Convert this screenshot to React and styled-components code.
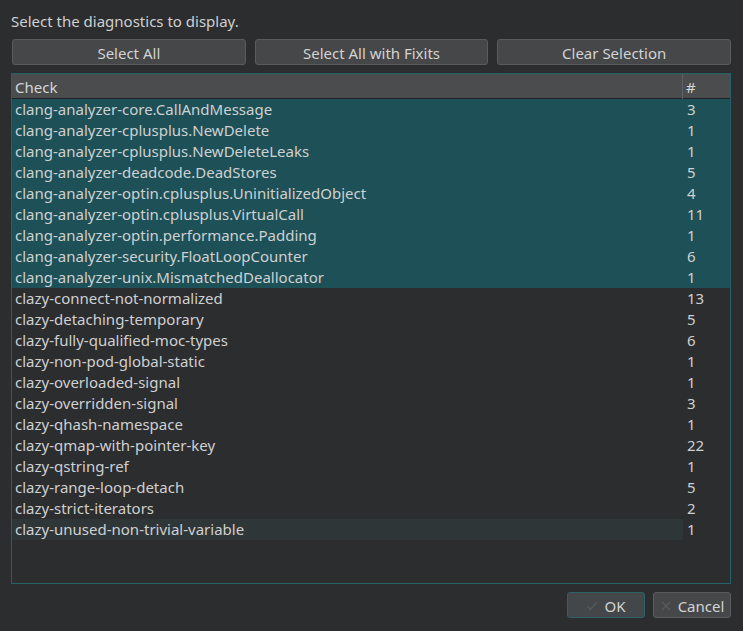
import React from "react";
import styled, { createGlobalStyle } from "styled-components";

const Global = createGlobalStyle`
  html, body { margin: 0; padding: 0; background: #2c2d2f; }
  body { font-family: "Noto Sans", "Open Sans", sans-serif; }
`;

const Dialog = styled.div`
  width: 743px;
  height: 631px;
  box-sizing: border-box;
  padding: 11px 12px 13px 11px;
  display: flex;
  flex-direction: column;
  background: #2c2d2f;
  color: #cfd0d1;
  font-size: 15px;
`;

const Label = styled.div`
  height: 20px;
  line-height: 20px;
  margin-bottom: 8px;
`;

const ButtonRow = styled.div`
  display: grid;
  grid-template-columns: 1fr 1fr 1fr;
  gap: 9px;
  padding-left: 1px;
  margin-bottom: 8px;
`;

const Button = styled.button`
  height: 26px;
  box-sizing: border-box;
  border: 1px solid ${(p) => (p.$focus ? "#2a6367" : "#5a5b5d")};
  border-radius: 3px;
  background: ${(p) => (p.$focus ? "#434749" : "#464748")};
  color: #d2d3d4;
  font-family: inherit;
  font-size: 15px;
  padding: 1px 0 0;
  display: flex;
  align-items: center;
  justify-content: center;
  gap: 6px;
`;

const Table = styled.div`
  flex: 1;
  border: 1px solid #246266;
  display: flex;
  flex-direction: column;
  overflow: hidden;
`;

const Header = styled.div`
  display: grid;
  grid-template-columns: 671px 1fr;
  height: 24px;
  background: #4b4c4d;
  border-bottom: 1px solid #1f2021;
  color: #d6d7d8;
`;

const HeadCell = styled.div`
  padding-left: ${(p) => p.$pad}px;
  line-height: 26px;
  border-right: ${(p) => (p.$divider ? "1px solid #5f6061" : "none")};
`;

const Row = styled.div`
  display: grid;
  grid-template-columns: 671px 1fr;
  height: 21px;
  line-height: 21px;
  background: ${(p) => (p.$selected ? "#1d5057" : "transparent")};
`;

const Cell = styled.div`
  padding-left: ${(p) => p.$pad}px;
  white-space: nowrap;
  background: ${(p) => (p.$hover ? "#2f3638" : "transparent")};
`;

const Footer = styled.div`
  display: flex;
  justify-content: flex-end;
  gap: 8px;
  margin-top: 8px;
`;

const FooterButton = styled(Button)`
  width: 78px;
`;

const Icon = styled.svg`
  width: 12px;
  height: 12px;
  opacity: 0.2;
`;

const data = [
  ["clang-analyzer-core.CallAndMessage", 3, true],
  ["clang-analyzer-cplusplus.NewDelete", 1, true],
  ["clang-analyzer-cplusplus.NewDeleteLeaks", 1, true],
  ["clang-analyzer-deadcode.DeadStores", 5, true],
  ["clang-analyzer-optin.cplusplus.UninitializedObject", 4, true],
  ["clang-analyzer-optin.cplusplus.VirtualCall", 11, true],
  ["clang-analyzer-optin.performance.Padding", 1, true],
  ["clang-analyzer-security.FloatLoopCounter", 6, true],
  ["clang-analyzer-unix.MismatchedDeallocator", 1, true],
  ["clazy-connect-not-normalized", 13],
  ["clazy-detaching-temporary", 5],
  ["clazy-fully-qualified-moc-types", 6],
  ["clazy-non-pod-global-static", 1],
  ["clazy-overloaded-signal", 1],
  ["clazy-overridden-signal", 3],
  ["clazy-qhash-namespace", 1],
  ["clazy-qmap-with-pointer-key", 22],
  ["clazy-qstring-ref", 1],
  ["clazy-range-loop-detach", 5],
  ["clazy-strict-iterators", 2],
  ["clazy-unused-non-trivial-variable", 1, false, true],
];

export default function App() {
  return (
    <>
      <Global />
      <Dialog>
        <Label>Select the diagnostics to display.</Label>
        <ButtonRow>
          <Button>Select All</Button>
          <Button>Select All with Fixits</Button>
          <Button>Clear Selection</Button>
        </ButtonRow>
        <Table>
          <Header>
            <HeadCell $pad={3} $divider>Check</HeadCell>
            <HeadCell $pad={3}>#</HeadCell>
          </Header>
          {data.map(([name, count, sel, hover]) => (
            <Row key={name} $selected={sel}>
              <Cell $pad={3} $hover={hover}>{name}</Cell>
              <Cell $pad={4}>{count}</Cell>
            </Row>
          ))}
        </Table>
        <Footer>
          <FooterButton $focus>
            <Icon viewBox="0 0 12 12">
              <path d="M1.5 6.5 L4.5 9.5 L10.5 2.5" fill="none" stroke="#9aa" strokeWidth="1.3" />
            </Icon>
            OK
          </FooterButton>
          <FooterButton>
            <Icon viewBox="0 0 12 12">
              <path d="M2 2 L10 10 M10 2 L2 10" fill="none" stroke="#9aa" strokeWidth="1.3" />
            </Icon>
            Cancel
          </FooterButton>
        </Footer>
      </Dialog>
    </>
  );
}
